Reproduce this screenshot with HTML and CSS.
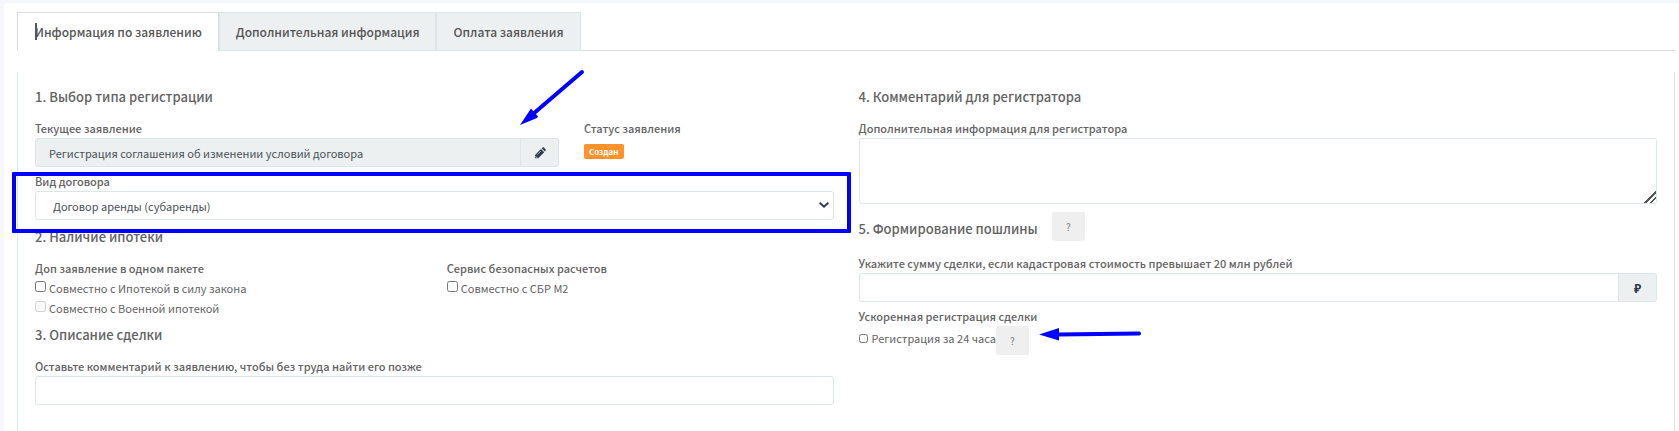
FILE: index.html
```html
<!DOCTYPE html>
<html lang="ru">
<head>
  <meta charset="UTF-8">
  <meta name="viewport" content="width=device-width, initial-scale=1.0">
  <link rel="stylesheet" href="styles.css">
  <title>Информация по заявлению</title>
</head>
<body class="page">
  <main class="card">
    <nav class="tabs">
      <a class="tabs__item tabs__item_active" href="#info"><span class="tabs__caret"></span>Информация по заявлению</a>
      <a class="tabs__item" href="#extra">Дополнительная информация</a>
      <a class="tabs__item" href="#payment">Оплата заявления</a>
    </nav>

    <form class="panel" id="info">
      <div class="column">
        <section class="section">
          <h2 class="title">1. Выбор типа регистрации</h2>
          <div class="row">
            <div class="field row__wide">
              <label class="label" for="current">Текущее заявление</label>
              <div class="group">
                <input class="input input_readonly" id="current" type="text" value="Регистрация соглашения об изменении условий договора" readonly>
                <button class="group__addon" type="button" aria-label="Изменить">
                  <svg width="12" height="12" viewBox="0 0 12 12">
                    <path fill="#2f3a4f" d="M1 11.200V8L7 2l3.200 3.200-6 6zM7.700 1.300l.6-.6c.5-.5 1.200-.5 1.700 0l1.400 1.400c.5.5.5 1.200 0 1.700l-.6.6z"/>
                    <path fill="none" stroke="#ecf0f1" stroke-width=".6" d="M3.200 7.800 7 4M1.800 8.800v1.600h1.600"/>
                  </svg>
                </button>
              </div>
              <svg class="arrow arrow_edit" width="68" height="60" viewBox="0 0 68 60">
                <path d="M64 4 15 46" stroke="#00f" stroke-width="4" stroke-linecap="round"/>
                <path d="M2 57 13 40.500 16 44 20 48.500 19 50z" fill="#00f"/>
              </svg>
            </div>
            <div class="field row__narrow">
              <span class="label">Статус заявления</span>
              <span class="badge">Создан</span>
            </div>
          </div>
          <div class="field field_marked">
            <label class="label" for="contract">Вид договора</label>
            <div class="select">
              <select class="select__control" id="contract">
                <option>Договор аренды (субаренды)</option>
              </select>
              <svg class="select__icon" width="10" height="6" viewBox="0 0 10 6">
                <path d="M.7.7 5 4.700 9.300.7" fill="none" stroke="#343a50" stroke-width="2"/>
              </svg>
            </div>
          </div>
        </section>

        <section class="section section_mortgage">
          <h2 class="title">2. Наличие ипотеки</h2>
          <div class="row">
            <div class="row__half">
              <span class="label">Доп заявление в одном пакете</span>
              <label class="check"><input class="check__box" type="checkbox">Совместно с Ипотекой в силу закона</label>
              <label class="check"><input class="check__box" type="checkbox" disabled>Совместно с Военной ипотекой</label>
            </div>
            <div class="row__half">
              <span class="label">Сервис безопасных расчетов</span>
              <label class="check"><input class="check__box" type="checkbox">Совместно с СБР М2</label>
            </div>
          </div>
        </section>

        <section class="section">
          <h2 class="title">3. Описание сделки</h2>
          <div class="field">
            <label class="label" for="note">Оставьте комментарий к заявлению, чтобы без труда найти его позже</label>
            <input class="input" id="note" type="text">
          </div>
        </section>
      </div>

      <div class="column">
        <section class="section">
          <h2 class="title">4. Комментарий для регистратора</h2>
          <div class="field">
            <label class="label" for="comment">Дополнительная информация для регистратора</label>
            <textarea class="input input_area" id="comment"></textarea>
          </div>
        </section>

        <section class="section">
          <div class="heading">
            <h2 class="title">5. Формирование пошлины</h2>
            <button class="help" type="button">?</button>
          </div>
          <div class="field">
            <label class="label" for="sum">Укажите сумму сделки, если кадастровая стоимость превышает 20 млн рублей</label>
            <div class="group">
              <input class="input" id="sum" type="text">
              <span class="group__addon">₽</span>
            </div>
          </div>
          <div class="field">
            <span class="label">Ускоренная регистрация сделки</span>
            <div class="fast">
              <label class="fast__label"><input class="fast__box" type="checkbox">Регистрация за 24 часа</label>
              <button class="help" type="button">?</button>
              <svg class="arrow arrow_fast" width="106" height="16" viewBox="0 0 106 16">
                <path d="M20 8.500 101 7.500" stroke="#00f" stroke-width="4" stroke-linecap="round"/>
                <path d="M1 8.500 21 2V14.500z" fill="#00f"/>
              </svg>
            </div>
          </div>
        </section>
      </div>
    </form>
  </main>
</body>
</html>
```
FILE: styles.css
```css
* {
  box-sizing: border-box;
}

.page {
  margin: 0;
  min-height: 100vh;
  padding: 3px 0 0 4px;
  display: flex;
  background: #f5f7fb;
  color: #636363;
  font-family: 'Noto Sans CJK SC', 'Noto Sans', sans-serif;
  font-size: 11px;
  line-height: 20px;
}

.card {
  flex: 1;
  display: flex;
  flex-direction: column;
  padding: 9px 4px 0 13px;
  background: #fff;
  border-radius: 3px 0 0 0;
}

.tabs {
  display: flex;
  border-bottom: 1px solid #dbdbdb;
}

.tabs__item {
  position: relative;
  margin-bottom: -1px;
  padding: 9px 16px 8px;
  border: 1px solid #dce6e8;
  background: #ecf0f1;
  color: #555;
  font-size: 12px;
  font-weight: 500;
  text-decoration: none;
}

.tabs__item_active {
  padding-left: 17px;
  border-color: #dbdbdb;
  border-bottom-color: #fff;
  background: #fff;
}

.tabs__caret {
  position: absolute;
  top: 10px;
  left: 17px;
  width: 2px;
  height: 17px;
  background: #555;
}

.panel {
  flex: 1;
  display: grid;
  grid-template-columns: 1fr 1fr;
  gap: 25px;
  margin-top: 21px;
  padding: 15px 17px;
  border: 1px solid #dce6e8;
  border-width: 0 1px;
}

.column {
  min-width: 0;
}

.title {
  margin: 0 0 11px;
  font-size: 13px;
  font-weight: 500;
  line-height: 20px;
}

.row {
  display: grid;
  grid-template-columns: repeat(12, minmax(0, 1fr));
  column-gap: 25px;
}

.row__wide {
  grid-column: span 8;
}

.row__narrow {
  grid-column: span 4;
}

.row__half {
  grid-column: span 6;
}

.field {
  position: relative;
  margin-bottom: 4px;
}

.label {
  display: block;
  font-weight: 500;
}

.input,
.select__control {
  display: block;
  width: 100%;
  height: 29px;
  padding: 0 13px;
  border: 1px solid #dce6e8;
  border-radius: 3px;
  background: #fff;
  color: #495057;
  font: inherit;
}

.input_readonly {
  background: #ecf0f1;
}

.input_area {
  height: 66px;
  margin-bottom: 8px;
}

.input_area::-webkit-resizer {
  background: linear-gradient(135deg, transparent 60%, #555 60%, #555 67%, transparent 67%, transparent 78%, #555 78%, #555 85%, transparent 85%);
}

.group {
  display: flex;
}

.group .input {
  flex: 1;
  min-width: 0;
  border-radius: 3px 0 0 3px;
}

.group__addon {
  display: flex;
  align-items: center;
  justify-content: center;
  width: 39px;
  margin-left: -1px;
  padding: 0;
  border: 1px solid #dce6e8;
  border-radius: 0 3px 3px 0;
  background: #ecf0f1;
  color: #2f3a4f;
  font-size: 12px;
  font-weight: 700;
}

.badge {
  display: inline-block;
  margin-top: 6px;
  padding: 0 5px;
  border-radius: 2px;
  background: #ff922b;
  color: #fff;
  font-size: 8px;
  font-weight: 700;
  line-height: 15px;
  vertical-align: top;
}

.select {
  position: relative;
}

.select__control {
  padding: 0 17px;
  appearance: none;
}

.select__icon {
  position: absolute;
  top: 11px;
  right: 5px;
}

/* highlighted field */
.field_marked::after {
  content: '';
  position: absolute;
  inset: 1px -17px -13px -23px;
  border: 4px solid #00f;
  border-radius: 1px;
  pointer-events: none;
}

.section_mortgage {
  margin: 7px 0;
}

.check {
  display: flex;
  align-items: center;
  gap: 3px;
}

.check__box {
  width: 11px;
  height: 11px;
  margin: 0 0 3px;
}

.heading {
  display: flex;
  align-items: center;
  gap: 14px;
  margin-bottom: 12px;
}

.heading .title {
  margin: 4px 0 0;
}

.help {
  width: 33px;
  height: 29px;
  padding: 0;
  border: 0;
  border-radius: 2px;
  background: #efefef;
  color: #777;
  font: inherit;
  font-size: 10px;
}

.fast {
  display: flex;
  align-items: flex-start;
}

.fast__label {
  display: flex;
  align-items: center;
  gap: 4px;
  padding-top: 2px;
}

.fast__box {
  width: 9px;
  height: 9px;
  margin: 0;
}

.arrow {
  position: absolute;
  fill: none;
}

.arrow_edit {
  top: -50px;
  right: -27px;
}

.arrow_fast {
  top: 20px;
  left: 179px;
}
```
